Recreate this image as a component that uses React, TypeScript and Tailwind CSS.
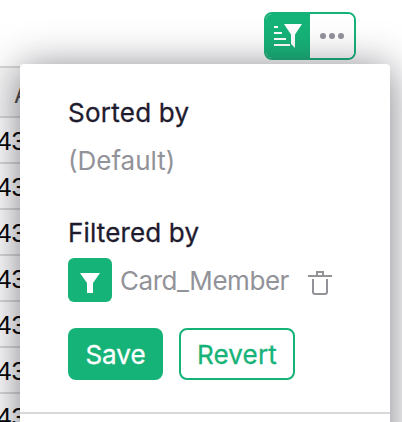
const rows = [0, 1, 2, 3, 4, 5, 6];

function SortFilterIcon() {
  return (
    <svg width="44" height="44" viewBox="0 0 44 44" fill="#fff">
      <path d="M8 12h4v2H8zM8 18h8v2H8zM8 24h12v2H8zM8 30h16v2H8z" />
      <path d="M18 10h18l-7 10.5V34l-4-4v-9.5z" />
    </svg>
  );
}

function FilterIcon() {
  return (
    <svg width="20" height="20" viewBox="0 0 20 20" fill="#fff">
      <path d="M0 0h20l-7 10v10H7V10z" />
    </svg>
  );
}

function TrashIcon() {
  return (
    <svg width="24" height="24" viewBox="0 0 24 24" fill="none" stroke="#929299" strokeWidth="2">
      <path d="M0 5h24M9 5V1h6v4" />
      <path d="M5 8v13a2 2 0 0 0 2 2h10a2 2 0 0 0 2-2V8" />
    </svg>
  );
}

export default function App() {
  return (
    <div className="relative h-[422px] w-[402px] overflow-hidden bg-white font-['Inter',sans-serif]">
      <div className="flex h-[66px] justify-end pr-[46px] pt-3">
        <div className="flex h-12 w-[92px] overflow-hidden rounded-lg border-2 border-[#16b378]">
          <div className="flex w-11 shrink-0 bg-[#16b378]">
            <SortFilterIcon />
          </div>
          <div className="flex flex-1 items-center justify-center gap-[3px] bg-white">
            <span className="size-1.5 rounded-full bg-[#929299]" />
            <span className="size-1.5 rounded-full bg-[#929299]" />
            <span className="size-1.5 rounded-full bg-[#929299]" />
          </div>
        </div>
      </div>

      <div className="w-[200px]">
        <div className="flex h-[52px] items-center border-y-2 border-[#d9d9d9] bg-[#f7f7f7] pl-3.5 text-[24px] text-[#494949]">
          <span className="pt-1.5">A</span>
        </div>
        {rows.map((row) => (
          <div
            key={row}
            className="flex h-[46px] items-center border-b-2 border-[#d9d9d9] font-['Liberation_Sans',sans-serif] text-[26px] text-black"
          >
            <span className="-ml-[3px] pt-0.5">43</span>
          </div>
        ))}
      </div>

      <div className="absolute left-5 top-16 h-[500px] w-[370px] rounded-[4px] bg-white shadow-[0_4px_40px_0_rgba(38,38,51,0.6)]">
        <div className="flex h-[348px] flex-col px-12 pt-8 text-[26px] leading-[34px]">
          <h2 className="tracking-[0.25px] text-[#1f1b2e] [-webkit-text-stroke:0.3px]">Sorted by</h2>
          <p className="mt-3.5 text-[#929299]">(Default)</p>
          <h2 className="mt-[38px] tracking-[0.15px] text-[#1f1b2e] [-webkit-text-stroke:0.3px]">Filtered by</h2>
          <div className="mt-2 flex h-11 items-center text-[#929299]">
            <div className="flex size-11 shrink-0 items-center justify-center rounded-md bg-[#16b378] pt-[6px]">
              <FilterIcon />
            </div>
            <span className="ml-2 w-[188px] shrink-0 pt-0.5 tracking-[-0.45px]">Card_Member</span>
            <span className="shrink-0 pt-1.5">
              <TrashIcon />
            </span>
          </div>
          <div className="mt-[26px] flex gap-4">
            <button className="h-[52px] w-[95px] rounded-lg bg-[#16b378] pt-0.5 text-white [-webkit-text-stroke:0.3px]">
              Save
            </button>
            <button className="h-[52px] w-[116px] rounded-lg border-2 border-[#16b378] pt-0.5 tracking-[0.2px] text-[#16b378] [-webkit-text-stroke:0.3px]">
              Revert
            </button>
          </div>
        </div>
        <div className="h-0.5 bg-[#d9d9d9]" />
      </div>
    </div>
  );
}
